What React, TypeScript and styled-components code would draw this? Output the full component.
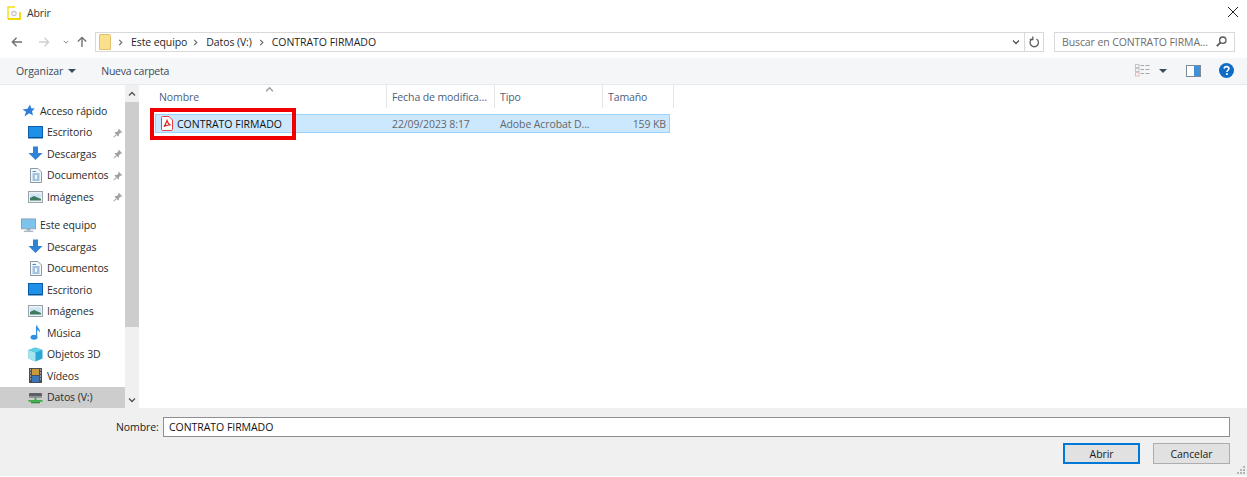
import React from 'react';
import styled, { createGlobalStyle } from 'styled-components';

const Global = createGlobalStyle`
  html, body { margin: 0; padding: 0; background: #fff; }
  #root { width: 1247px; height: 477px; overflow: hidden; }
  * { box-sizing: border-box; }
`;

const Dialog = styled.div`
  position: relative;
  width: 1247px;
  height: 477px;
  display: flex;
  flex-direction: column;
  background: #fff;
  font-family: "Open Sans", "Noto Sans", sans-serif;
  font-size: 10.5px;
  color: #1a1a1a;
  letter-spacing: -0.1px;
`;
const TitleBar = styled.div`
  height: 32px;
  flex: none;
  display: flex;
  align-items: flex-start;
  padding: 6px 8px 0 7px;
  gap: 6px;
`;
const TitleText = styled.span`
  line-height: 14px;
  color: #333;
`;
const CloseBox = styled.div`
  margin-left: auto;
  width: 12px;
  height: 12px;
`;
const AddressRow = styled.div`
  height: 26px;
  flex: none;
  display: flex;
  align-items: flex-start;
  padding-left: 10px;
`;
const NavIcons = styled.div`
  width: 85px;
  height: 20px;
  display: flex;
  align-items: center;
  flex: none;
`;
const NavSlot = styled.div<{ $w: number }>`
  width: ${p => p.$w}px;
  display: flex;
  align-items: center;
  justify-content: center;
`;
const AddressBox = styled.div`
  width: 949px;
  height: 20px;
  border: 1px solid #d9d9d9;
  display: flex;
  align-items: center;
  padding-left: 3px;
  flex: none;
  color: #1f1f1f;
`;
const Crumb = styled.span<{ $after?: number }>`
  margin: 0 ${p => p.$after ?? 7}px 0 7px;
  padding-bottom: 1px;
`;
const CrumbName = styled(Crumb)`
  letter-spacing: -0.04px;
`;
const CrumbSep = styled.span<{ $first?: boolean }>`
  display: inline-flex;
  align-items: center;
  margin-left: ${p => (p.$first ? 6 : 0)}px;
`;
const AddressEnd = styled.div`
  margin-left: auto;
  height: 18px;
  display: flex;
  align-items: center;
`;
const EndCell = styled.div<{ $line?: boolean; $shift?: number }>`
  width: 19px;
  height: 18px;
  padding-left: ${p => p.$shift ?? 0}px;
  display: flex;
  align-items: center;
  justify-content: center;
  ${p => (p.$line ? 'border-left: 1px solid #d9d9d9;' : '')}
`;
const SearchBox = styled.div`
  margin-left: 10px;
  width: 181px;
  height: 20px;
  border: 1px solid #d9d9d9;
  display: flex;
  align-items: center;
  justify-content: space-between;
  padding: 0 7px 1px 7px;
  color: #6d6d6d;
  flex: none;
  white-space: nowrap;
`;
const Toolbar = styled.div`
  height: 27px;
  flex: none;
  background: #f5f6f7;
  border-bottom: 1px solid #e8e9ea;
  display: flex;
  align-items: center;
  padding: 0 13px 1px 16px;
  color: #3a4a5a;
`;
const ToolButton = styled.span`
  display: inline-flex;
  align-items: center;
  gap: 5px;
`;
const NewFolder = styled(ToolButton)`
  margin-left: 25px;
  letter-spacing: -0.25px;
`;
const ToolRight = styled.div`
  margin-left: auto;
  display: flex;
  align-items: center;
`;
const ToolGap = styled.span<{ $w: number }>`
  width: ${p => p.$w}px;
`;
const Main = styled.div`
  flex: 1;
  min-height: 0;
  display: flex;
  background: #fff;
`;
const Sidebar = styled.nav`
  width: 125px;
  flex: none;
  padding-top: 15px;
  overflow: hidden;
`;
const Group = styled.div`
  margin-bottom: 7px;
`;
const NavRow = styled.div<{ $sub?: boolean; $selected?: boolean }>`
  position: relative;
  height: 21.5px;
  display: flex;
  align-items: center;
  padding-left: ${p => (p.$sub ? 28 : 21)}px;
  gap: 4px;
  color: #2b2b2b;
  background: ${p => (p.$selected ? '#cdcdcd' : 'transparent')};
  white-space: nowrap;
`;
const Pin = styled.span`
  position: absolute;
  left: 113px;
  top: 6px;
  display: flex;
`;
const IconSlot = styled.span`
  width: 15px;
  height: 15px;
  display: flex;
  align-items: center;
  justify-content: center;
  flex: none;
`;
const Scrollbar = styled.div`
  width: 14px;
  margin-right: 1px;
  flex: none;
  background: #f0f0f0;
  display: flex;
  flex-direction: column;
`;
const ScrollArrow = styled.div`
  height: 17px;
  flex: none;
  display: flex;
  align-items: center;
  justify-content: center;
`;
const ScrollThumb = styled.div`
  height: 225px;
  flex: none;
  background: #cdcdcd;
`;
const ScrollGap = styled.div`
  flex: 1;
`;
const Content = styled.div`
  flex: 1;
  min-width: 0;
  padding-left: 15px;
  display: flex;
  flex-direction: column;
`;
const HeaderRow = styled.div`
  position: relative;
  height: 23px;
  display: flex;
  flex: none;
  color: #4c607a;
`;
const SortCaret = styled.span`
  position: absolute;
  left: 110px;
  top: 0;
  display: flex;
`;
const HeaderCell = styled.div<{ $w: number; $pad?: number }>`
  width: ${p => p.$w}px;
  height: 23px;
  padding-left: ${p => p.$pad ?? 5}px;
  display: flex;
  align-items: center;
  padding-top: 1px;
  border-right: 1px solid #e5e5e5;
  flex: none;
  white-space: nowrap;
`;
const FileRow = styled.div`
  margin-top: 6px;
  width: 515px;
  height: 19px;
  background: #cce8ff;
  border: 1px solid #99d1ff;
  display: flex;
  align-items: center;
  color: #666;
`;
const NameCell = styled.div`
  width: 232px;
  flex: none;
  display: flex;
  align-items: center;
  padding-left: 5px;
  gap: 4px;
  color: #111;
  letter-spacing: 0;
`;
const DateCell = styled.div`
  width: 108px;
  flex: none;
  padding-left: 4px;
`;
const TypeCell = styled.div`
  width: 108px;
  flex: none;
  padding-left: 4px;
  white-space: nowrap;
`;
const SizeCell = styled.div`
  flex: 1;
  text-align: right;
  padding-right: 3px;
`;
const Footer = styled.div`
  height: 69px;
  flex: none;
  background: #f0f0f0;
  border-bottom: 1px solid #fff;
  display: flex;
  flex-direction: column;
`;
const NameLine = styled.div`
  margin-top: 9px;
  height: 20px;
  display: flex;
  align-items: center;
  padding-left: 116px;
`;
const NameLabel = styled.span`
  width: 47px;
  flex: none;
  color: #222;
`;
const NameInput = styled.div`
  width: 1067px;
  height: 20px;
  background: #fff;
  border: 1px solid #8f8f8f;
  display: flex;
  align-items: center;
  padding-left: 5px;
  color: #111;
  letter-spacing: -0.04px;
`;
const ButtonLine = styled.div`
  margin-top: 6px;
  display: flex;
  justify-content: flex-end;
  gap: 13px;
  padding-right: 17px;
`;
const DialogButton = styled.div<{ $primary?: boolean }>`
  width: 77px;
  height: 21px;
  background: #e1e1e1;
  border: ${p => (p.$primary ? '2px solid #0078d7' : '1px solid #adadad')};
  display: flex;
  align-items: center;
  justify-content: center;
  color: #1a1a1a;
`;
const Highlight = styled.div`
  position: absolute;
  left: 150px;
  top: 108px;
  width: 146px;
  height: 32px;
  border: 4px solid #f00000;
  pointer-events: none;
`;
const Grip = styled.svg`
  position: absolute;
  right: 2px;
  bottom: 3px;
`;

const Chevron = ({ dir = 'right', c = '#6a6a6a', s = 7 }: { dir?: 'right' | 'down' | 'up'; c?: string; s?: number }) => (
  <svg width={s} height={s} viewBox="0 0 8 8" fill="none" stroke={c} strokeWidth="1.3">
    {dir === 'right' && <path d="M2.5 1L5.5 4L2.5 7" />}
    {dir === 'down' && <path d="M1 2.5L4 5.5L7 2.5" />}
    {dir === 'up' && <path d="M1 5.5L4 2.5L7 5.5" />}
  </svg>
);
const Arrow = ({ rot, c }: { rot: number; c: string }) => (
  <svg width="12" height="12" viewBox="0 0 13 13" fill="none" stroke={c} strokeWidth="1.5" style={{ transform: `rotate(${rot}deg)` }}>
    <path d="M1.5 6.5H12M6 2L1.5 6.5L6 11" />
  </svg>
);
const Caret = () => (
  <svg width="8" height="4" viewBox="0 0 8 4"><path d="M0 0H8L4 4Z" fill="#3a4a60" /></svg>
);
const PinIcon = () => (
  <svg width="10" height="10" viewBox="0 0 10 10" fill="#a0a0a0">
    <path d="M5.8 0.8L9.2 4.2L8.4 4.8L7.6 4.5L5.9 6.2L6 7.8L5.3 8.4L1.6 4.7L2.2 4L3.8 4.1L5.5 2.4L5.2 1.6Z" />
    <path d="M3 6.2L3.8 7L1 9.6L0.4 9Z" />
  </svg>
);
const Desktop = () => (
  <svg width="15" height="13" viewBox="0 0 15 13">
    <rect x="0.5" y="0.5" width="14" height="11.5" fill="#1e90e8" stroke="#0a5ea8" />
    <path d="M1 11H14V12H1Z" fill="#0a4f90" />
  </svg>
);
const Download = () => (
  <svg width="15" height="15" viewBox="0 0 15 15"><path d="M5 0.5H10V7H14.5L7.5 14L0.5 7H5Z" fill="#2f83d6" /></svg>
);
const Doc = () => (
  <svg width="12" height="15" viewBox="0 0 12 15">
    <path d="M0.5 0.5H8L11.5 4V14.5H0.5Z" fill="#f4f7fa" stroke="#8c99a6" />
    <path d="M2.5 3.5H6M2.5 6H9.5M2.5 8H5M7 8H9.5M2.5 10H5M7 10H9.5M2.5 12H9.5" stroke="#4d90cc" />
  </svg>
);
const Pictures = () => (
  <svg width="15" height="12" viewBox="0 0 15 12">
    <rect x="0.5" y="0.5" width="14" height="11" fill="#eef2f5" stroke="#9aa3ab" />
    <rect x="2" y="2.5" width="11" height="7" fill="#cfe5f5" />
    <path d="M2 7L6 5L13 8V9.5H2Z" fill="#3e7a5e" />
  </svg>
);
const Star = () => (
  <svg width="13" height="13" viewBox="0 0 13 13"><path d="M8 0.5L9.3 4.2L12.8 4.6L10 7.2L11 11.5L7.2 9.2L2.5 12.5L4 7.8L0.5 5.5L5.5 4.8Z" fill="#2f7fd6" /></svg>
);
const Monitor = () => (
  <svg width="16" height="15" viewBox="0 0 16 15">
    <rect x="0.5" y="0.5" width="15" height="10.5" fill="#7cc4ee" stroke="#8aa0b0" />
    <rect x="6" y="11" width="4" height="2" fill="#9ab" />
    <rect x="3" y="13" width="10" height="1.5" fill="#a9b8c4" />
  </svg>
);
const Music = () => (
  <svg width="12" height="15" viewBox="0 0 12 15" fill="#2f8fe0">
    <ellipse cx="4" cy="12.3" rx="3.4" ry="2.5" />
    <path d="M6 0.5H7.2C7.5 3 10.5 4 10 7.5C9.3 6 8 5.2 7.2 5V12.5H6Z" />
  </svg>
);
const Cube = () => (
  <svg width="15" height="15" viewBox="0 0 15 15">
    <path d="M7.5 0.5L14.5 3V11.5L7.5 14.5L0.5 11.5V3Z" fill="#2aa6d8" />
    <path d="M0.5 3L7.5 5.5V14.5L0.5 11.5Z" fill="#a6e4ee" />
    <path d="M7.5 0.5L14.5 3L7.5 5.5L0.5 3Z" fill="#5fd0e6" />
  </svg>
);
const Film = () => (
  <svg width="13" height="15" viewBox="0 0 13 15">
    <rect width="13" height="15" fill="#4a4f55" />
    <rect x="3" y="1" width="7" height="6" fill="#c99a3a" />
    <rect x="3" y="8" width="7" height="6" fill="#3a78b8" />
    <path d="M1 2H2M1 5H2M1 8H2M1 11H2M11 2H12M11 5H12M11 8H12M11 11H12" stroke="#ddd" />
  </svg>
);
const Drive = () => (
  <svg width="15" height="13" viewBox="0 0 15 13">
    <rect x="1" y="2" width="13" height="4.5" rx="1" fill="#5c6066" />
    <rect x="1" y="5" width="13" height="1.5" fill="#8f9399" />
    <rect x="6.5" y="6.5" width="2" height="3" fill="#3fae49" />
    <rect x="0.5" y="9" width="14" height="1.8" fill="#3fae49" />
    <rect x="3" y="10.8" width="9" height="1.5" fill="#2d8f38" />
  </svg>
);
const Pdf = () => (
  <svg width="12" height="15" viewBox="0 0 12 15" fill="none">
    <path d="M1.5 0.5H8L11.5 4V13.2C11.5 14 11 14.5 10.2 14.5H1.8C1 14.5 0.5 14 0.5 13.2V1.5C0.5 1 1 0.5 1.5 0.5Z" fill="#fff" stroke="#e8403a" />
    <path d="M6 4.5C5.4 6.5 4.5 9 2.8 10.6C4.6 9.4 7 8.8 9.4 9C8 8.3 6.6 6.8 6 4.5Z" stroke="#d8201c" strokeWidth="1.1" />
  </svg>
);
const AppIcon = () => (
  <svg width="14" height="14" viewBox="0 0 14 14" fill="none">
    <path d="M1 13V1H8" stroke="#f6dc10" strokeWidth="1.4" />
    <path d="M1 13H13V6" stroke="#f4d800" strokeWidth="1.8" />
    <circle cx="7" cy="7.5" r="2.2" stroke="#c4c4c4" strokeWidth="1.2" />
  </svg>
);
const Folder = () => (
  <svg width="12" height="16" viewBox="0 0 12 16">
    <path d="M0.5 1C0.5 0.7 0.7 0.5 1 0.5H10.5C11 0.5 11.5 1 11.5 1.5V15.5H0.5Z" fill="#fbe08b" stroke="#e0c070" />
  </svg>
);
const Refresh = () => (
  <svg width="11" height="12" viewBox="0 0 11 12" fill="none" stroke="#5f5f5f" strokeWidth="1.3">
    <path d="M3 3A4.2 4.2 0 1 0 7.5 3" />
    <path d="M3.8 0.5V3.5H0.8" />
  </svg>
);
const Search = () => (
  <svg width="11" height="11" viewBox="0 0 11 11" fill="none" stroke="#5a5a5a" strokeWidth="1.3">
    <circle cx="6.8" cy="4.2" r="3.2" />
    <path d="M4.4 6.6L0.8 10.2" strokeWidth="1.8" />
  </svg>
);
const ViewIcon = () => (
  <svg width="15" height="13" viewBox="0 0 15 13" fill="none">
    <rect x="0.5" y="0.5" width="3.5" height="3" stroke="#c4c4c4" />
    <rect x="0.5" y="4.5" width="3.5" height="3" stroke="#c4c4c4" />
    <rect x="0.5" y="8.5" width="3.5" height="3.5" stroke="#e6bcbc" />
    <path d="M5.5 1.5H9M10.5 1.5H14.5M5.5 5.5H9M10.5 5.5H14.5M5.5 9.5H9M10.5 9.5H14.5" stroke="#a8a8a8" />
  </svg>
);
const PaneIcon = () => (
  <svg width="15" height="12" viewBox="0 0 15 12">
    <rect x="0.5" y="0.5" width="14" height="11" fill="#fff" stroke="#7d8a96" />
    <rect x="8" y="1" width="6" height="10" fill="#3f92d8" />
  </svg>
);
const Help = () => (
  <svg width="15" height="15" viewBox="0 0 15 15">
    <circle cx="7.5" cy="7.5" r="7.5" fill="#0f6cc6" />
    <path d="M5.2 5.6C5.3 4.3 6.2 3.6 7.5 3.6C8.9 3.6 9.9 4.4 9.9 5.6C9.9 7.2 7.9 7.3 7.9 9" stroke="#fff" strokeWidth="1.6" fill="none" />
    <rect x="7" y="10.2" width="1.8" height="1.8" fill="#fff" />
  </svg>
);
const Close = () => (
  <svg width="12" height="12" viewBox="0 0 12 12" stroke="#222" strokeWidth="1" fill="none"><path d="M1 1L11 11M11 1L1 11" /></svg>
);

const quick = [
  { t: 'Escritorio', i: <Desktop /> },
  { t: 'Descargas', i: <Download /> },
  { t: 'Documentos', i: <Doc /> },
  { t: 'Imágenes', i: <Pictures /> },
];
const pc = [
  { t: 'Descargas', i: <Download /> },
  { t: 'Documentos', i: <Doc /> },
  { t: 'Escritorio', i: <Desktop /> },
  { t: 'Imágenes', i: <Pictures /> },
  { t: 'Música', i: <Music /> },
  { t: 'Objetos 3D', i: <Cube /> },
  { t: 'Vídeos', i: <Film /> },
  { t: 'Datos (V:)', i: <Drive /> },
];

export default function App() {
  return (
    <Dialog>
      <Global />
      <TitleBar>
        <AppIcon />
        <TitleText>Abrir</TitleText>
        <CloseBox><Close /></CloseBox>
      </TitleBar>
      <AddressRow>
        <NavIcons>
          <NavSlot $w={14}><Arrow rot={0} c="#6f6f6f" /></NavSlot>
          <NavSlot $w={39}><Arrow rot={180} c="#cfcfcf" /></NavSlot>
          <NavSlot $w={6}><Chevron dir="down" c="#8a8a8a" s={6} /></NavSlot>
          <NavSlot $w={26}><Arrow rot={90} c="#6f6f6f" /></NavSlot>
        </NavIcons>
        <AddressBox>
          <Folder />
          <CrumbSep $first><Chevron /></CrumbSep>
          <Crumb $after={5}>Este equipo</Crumb>
          <CrumbSep><Chevron /></CrumbSep>
          <Crumb $after={6}>Datos (V:)</Crumb>
          <CrumbSep><Chevron /></CrumbSep>
          <CrumbName>CONTRATO FIRMADO</CrumbName>
          <AddressEnd>
            <EndCell $shift={3}><Chevron dir="down" c="#555" s={8} /></EndCell>
            <EndCell $line><Refresh /></EndCell>
          </AddressEnd>
        </AddressBox>
        <SearchBox>
          <span>Buscar en CONTRATO FIRMA...</span>
          <Search />
        </SearchBox>
      </AddressRow>
      <Toolbar>
        <ToolButton>Organizar <Caret /></ToolButton>
        <NewFolder>Nueva carpeta</NewFolder>
        <ToolRight>
          <ViewIcon />
          <ToolGap $w={9} />
          <Caret />
          <ToolGap $w={19} />
          <PaneIcon />
          <ToolGap $w={18} />
          <Help />
        </ToolRight>
      </Toolbar>
      <Main>
        <Sidebar>
          <Group>
            <NavRow><IconSlot><Star /></IconSlot>Acceso rápido</NavRow>
            {quick.map(r => (
              <NavRow $sub key={r.t}>
                <IconSlot>{r.i}</IconSlot>{r.t}
                <Pin><PinIcon /></Pin>
              </NavRow>
            ))}
          </Group>
          <NavRow><IconSlot><Monitor /></IconSlot>Este equipo</NavRow>
          {pc.map(r => (
            <NavRow $sub key={r.t} $selected={r.t.startsWith('Datos')}>
              <IconSlot>{r.i}</IconSlot>{r.t}
            </NavRow>
          ))}
        </Sidebar>
        <Scrollbar>
          <ScrollArrow><Chevron dir="up" c="#505050" s={8} /></ScrollArrow>
          <ScrollThumb />
          <ScrollGap />
          <ScrollArrow><Chevron dir="down" c="#505050" s={8} /></ScrollArrow>
        </Scrollbar>
        <Content>
          <HeaderRow>
            <SortCaret><Chevron dir="up" c="#9aa0a6" s={9} /></SortCaret>
            <HeaderCell $w={232} $pad={4}>Nombre</HeaderCell>
            <HeaderCell $w={108}>Fecha de modifica...</HeaderCell>
            <HeaderCell $w={108}>Tipo</HeaderCell>
            <HeaderCell $w={71}>Tamaño</HeaderCell>
          </HeaderRow>
          <FileRow>
            <NameCell><Pdf />CONTRATO FIRMADO</NameCell>
            <DateCell>22/09/2023 8:17</DateCell>
            <TypeCell>Adobe Acrobat D...</TypeCell>
            <SizeCell>159 KB</SizeCell>
          </FileRow>
        </Content>
      </Main>
      <Footer>
        <NameLine>
          <NameLabel>Nombre:</NameLabel>
          <NameInput>CONTRATO FIRMADO</NameInput>
        </NameLine>
        <ButtonLine>
          <DialogButton $primary>Abrir</DialogButton>
          <DialogButton>Cancelar</DialogButton>
        </ButtonLine>
      </Footer>
      <Highlight />
      <Grip width="8" height="8" viewBox="0 0 8 8" fill="#b5b5b5">
        <rect x="6" y="0" width="2" height="2" />
        <rect x="3" y="3" width="2" height="2" />
        <rect x="6" y="3" width="2" height="2" />
        <rect x="0" y="6" width="2" height="2" />
        <rect x="3" y="6" width="2" height="2" />
        <rect x="6" y="6" width="2" height="2" />
      </Grip>
    </Dialog>
  );
}
